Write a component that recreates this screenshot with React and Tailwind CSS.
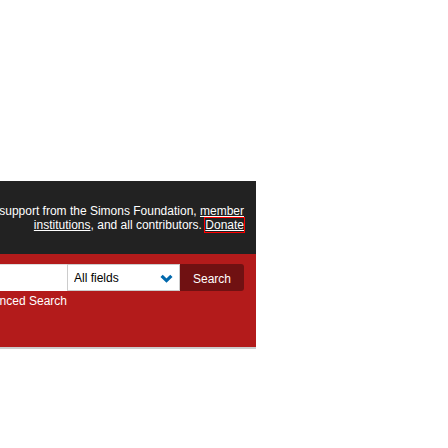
export default function App() {
  return (
    <div className="min-h-screen overflow-hidden bg-white pt-[181px] font-['Liberation_Sans',Arial,sans-serif] text-xs">
      <header className="w-4/7 text-white">
        <div className="flex h-[73px] justify-end bg-[#222] pt-[23px] pr-3">
          <p className="text-right leading-[14px] whitespace-nowrap">
            support from the Simons Foundation,{' '}
            <a href="#member" className="underline">member</a>
            <br />
            <a href="#institutions" className="underline">institutions</a>, and all contributors.{' '}
            <a href="#donate" className="underline outline outline-[#f00]">Donate</a>
          </p>
        </div>
        <form
          className="h-[95px] border-b-2 border-[#ccc] bg-[#b31b1b] pt-[10px] pr-3"
          onSubmit={(event) => event.preventDefault()}
        >
          <div className="flex h-[27px]">
            <input
              type="text"
              aria-label="Search term"
              className="min-w-0 flex-1 border-t border-[#ddd] bg-white px-2 text-black outline-none"
            />
            <div className="relative w-[113px]">
              <select
                aria-label="Field to search"
                className="h-full w-full appearance-none border border-[#ccc] bg-white px-[6px] text-black outline-none"
              >
                <option>All fields</option>
              </select>
              <svg
                className="pointer-events-none absolute top-[10px] right-[7px]"
                width="13"
                height="10"
                viewBox="0 0 13 10"
                fill="none"
                stroke="#0068ac"
                strokeWidth="3.2"
                aria-hidden="true"
              >
                <path d="M1.6 1.8 6.5 6.6 11.4 1.8" />
              </svg>
            </div>
            <button type="submit" className="w-16 rounded-r-[3px] bg-[#701112] pt-[2px] text-white">
              Search
            </button>
          </div>
          <div className="flex w-[67px] justify-end pt-[3px] leading-[14px] whitespace-nowrap">
            <a href="#advanced">nced Search</a>
          </div>
        </form>
      </header>
    </div>
  )
}
